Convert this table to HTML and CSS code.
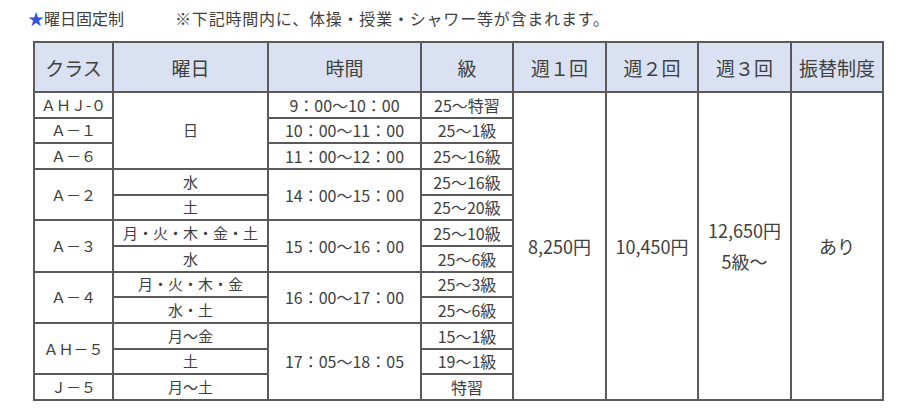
FILE: index.html
```html
<!DOCTYPE html>
<html lang="ja">
<head>
<meta charset="utf-8">
<link rel="stylesheet" href="styles.css">
</head>
<body>
<div class="page">
  <p class="note"><span class="star">★</span>曜日固定制<span class="remark">※下記時間内に、体操・授業・シャワー等が含まれます。</span></p>
  <table class="schedule">
    <colgroup>
      <col class="c-class"><col class="c-day"><col class="c-time"><col class="c-grade">
      <col class="c-p1"><col class="c-p2"><col class="c-p3"><col class="c-sub">
    </colgroup>
    <thead>
      <tr>
        <th>クラス</th><th>曜日</th><th>時間</th><th>級</th>
        <th>週１回</th><th>週２回</th><th>週３回</th><th>振替制度</th>
      </tr>
    </thead>
    <tbody>
      <tr>
        <td>ＡＨＪ-０</td><td rowspan="3">日</td><td class="time">9：00～10：00</td><td class="grade">25～特習</td>
        <td rowspan="12" class="big">8,250円</td><td rowspan="12" class="big">10,450円</td>
        <td rowspan="12" class="big two">12,650円<br>5級～</td><td rowspan="12" class="big">あり</td>
      </tr>
      <tr><td>Ａ－１</td><td class="time">10：00～11：00</td><td class="grade">25～1級</td></tr>
      <tr><td>Ａ－６</td><td class="time">11：00～12：00</td><td class="grade">25～16級</td></tr>
      <tr><td rowspan="2">Ａ－２</td><td>水</td><td rowspan="2" class="time">14：00～15：00</td><td class="grade">25～16級</td></tr>
      <tr><td>土</td><td class="grade">25～20級</td></tr>
      <tr><td rowspan="2">Ａ－３</td><td>月・火・木・金・土</td><td rowspan="2" class="time">15：00～16：00</td><td class="grade">25～10級</td></tr>
      <tr><td>水</td><td class="grade">25～6級</td></tr>
      <tr><td rowspan="2">Ａ－４</td><td>月・火・木・金</td><td rowspan="2" class="time">16：00～17：00</td><td class="grade">25～3級</td></tr>
      <tr><td>水・土</td><td class="grade">25～6級</td></tr>
      <tr><td rowspan="2">ＡＨ－５</td><td>月～金</td><td rowspan="3" class="time">17：05～18：05</td><td class="grade">15～1級</td></tr>
      <tr><td>土</td><td class="grade">19～1級</td></tr>
      <tr><td>Ｊ－５</td><td>月～土</td><td class="grade">特習</td></tr>
    </tbody>
  </table>
</div>
</body>
</html>
```
FILE: styles.css
```css
html, body {
  margin: 0;
  padding: 0;
  background: #ffffff;
}
body {
  font-family: "Noto Sans CJK JP", "Noto Sans", sans-serif;
  color: #404040;
}
.page {
  padding: 7px 0 0 28px;
}
.note {
  margin: 0;
  font-size: 16px;
  line-height: 22px;
  color: #404040;
}
.star {
  color: #2a55d9;
}
.remark {
  margin-left: 51px;
  letter-spacing: 0.8px;
}
.schedule {
  margin: 12px 0 0 5px;
  border-collapse: collapse;
  table-layout: fixed;
  width: 850px;
  font-size: 15px;
}
.c-class { width: 79px; }
.c-day { width: 155px; }
.c-time { width: 153px; }
.c-grade { width: 92px; }
.c-p1 { width: 93px; }
.c-p2 { width: 92px; }
.c-p3 { width: 93px; }
.c-sub { width: 92px; }
.schedule th,
.schedule td {
  border: 2px solid #5a5a5a;
  padding: 0;
  text-align: center;
  vertical-align: middle;
  white-space: nowrap;
  overflow: hidden;
}
.schedule th {
  background: #d9e1f2;
  font-weight: normal;
  font-size: 19px;
  height: 48px;
  color: #404040;
}
.schedule tbody tr {
  height: 25.67px;
}
.schedule td {
  line-height: 20px;
}
.schedule td.time,
.schedule td.grade {
  font-size: 16px;
}
.schedule td.big {
  font-size: 18px;
}
.schedule td.two {
  line-height: 31px;
}
```
